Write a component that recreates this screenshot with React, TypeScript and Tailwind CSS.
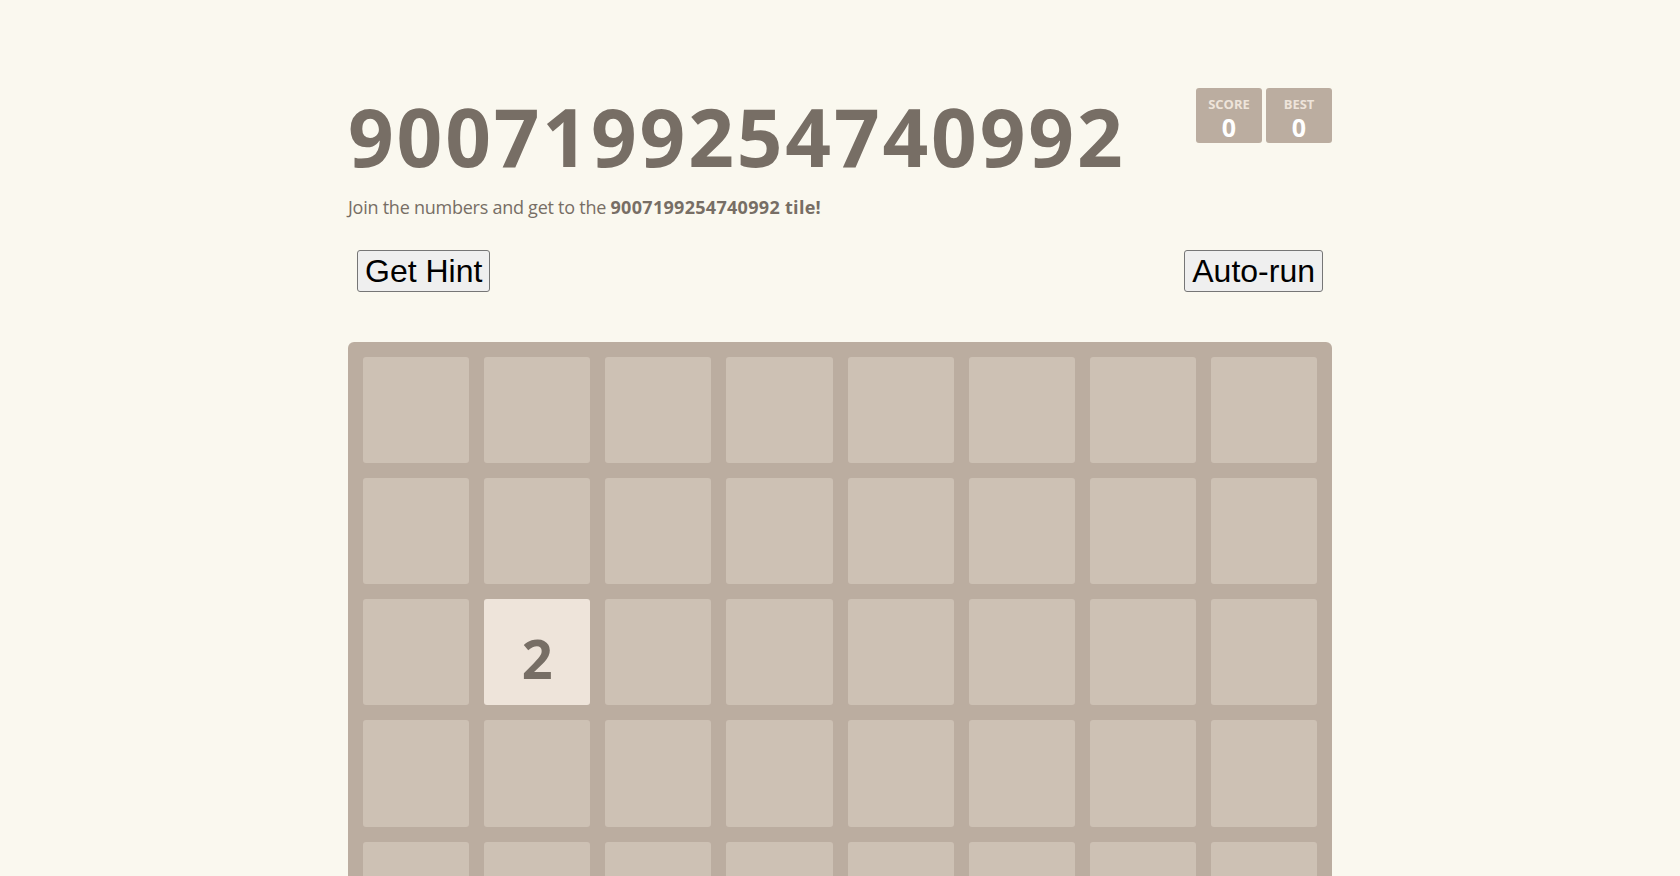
const TARGET = "9007199254740992";

const ROWS = 8;
const COLS = 8;

// only one tile on the board
const tiles: Record<string, number> = { "2-1": 2 };

function ScoreBox({ label, value }: { label: string; value: number }) {
  return (
    <div className="flex h-[55px] w-[66px] flex-col items-center rounded-[3px] bg-[#bbada0] pt-[10px]">
      <span className="text-[13px] font-bold uppercase leading-[13px] text-[#eee4da]">
        {label}
      </span>
      <span className="mt-[4px] text-[25px] font-bold leading-[25px] text-white">
        {value}
      </span>
    </div>
  );
}

function NativeButton({ children }: { children: React.ReactNode }) {
  return (
    <button
      type="button"
      className="h-[42px] rounded-[3px] border border-[#767676] bg-[#efefef] px-[7px] text-[32px] leading-[40px] text-black"
      style={{ fontFamily: '"Liberation Sans", Arial, sans-serif' }}
    >
      {children}
    </button>
  );
}

export default function App() {
  return (
    <div
      className="min-h-screen bg-[#faf8ef] text-[#776e65]"
      style={{ fontFamily: '"Open Sans", "Noto Sans", sans-serif' }}
    >
      <div className="mx-auto w-[984px] pt-[88px]">
        <div className="flex items-start justify-between">
          <h1 className="mt-[8px] text-[80px] font-bold leading-[80px] tracking-[2.85px]">
            {TARGET}
          </h1>
          <div className="flex gap-[4px]">
            <ScoreBox label="Score" value={0} />
            <ScoreBox label="Best" value={0} />
          </div>
        </div>
        <p className="mt-[18px] text-[18px] leading-[27px] tracking-[-0.25px]">
          Join the numbers and get to the{" "}
          <strong className="font-bold tracking-[0.3px]">{TARGET} tile!</strong>
        </p>

        <div className="mt-[29px] flex justify-between px-[9px]">
          <NativeButton>Get Hint</NativeButton>
          <NativeButton>Auto-run</NativeButton>
        </div>

        <div className="mt-[50px] grid grid-cols-8 gap-[15px] rounded-[6px] bg-[#bbada0] p-[15px]">
          {Array.from({ length: ROWS * COLS }).map((_, i) => {
            const r = Math.floor(i / COLS);
            const c = i % COLS;
            const v = tiles[`${r}-${c}`];
            return v ? (
              <div
                key={i}
                className="flex aspect-square items-center justify-center rounded-[3px] bg-[#eee4da] pt-[12px] text-[54px] font-bold text-[#776e65]"
              >
                {v}
              </div>
            ) : (
              <div key={i} className="aspect-square rounded-[3px] bg-[#cdc1b4]" />
            );
          })}
        </div>
      </div>
    </div>
  );
}
